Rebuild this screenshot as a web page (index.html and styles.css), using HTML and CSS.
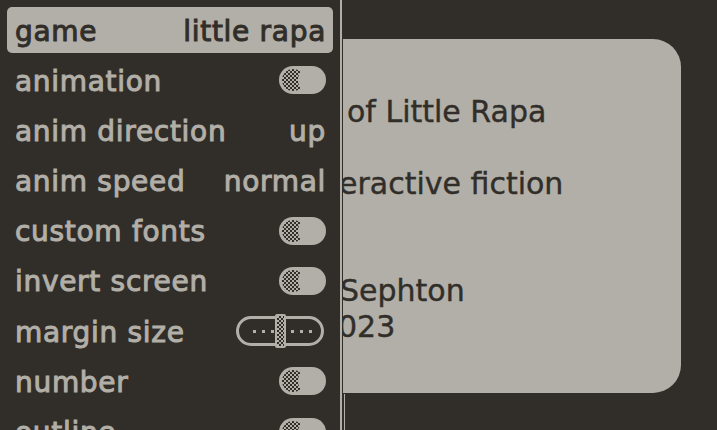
FILE: index.html
```html
<!DOCTYPE html>
<html lang="en">
<head>
<meta charset="utf-8">
<title>Settings</title>
<link rel="stylesheet" href="styles.css">
</head>
<body>
<div class="screen">
  <aside class="panel">
    <ul class="menu">
      <li class="row selected"><span class="label">game</span><span class="value">little rapa</span></li>
      <li class="row"><span class="label">animation</span><span class="toggle"></span></li>
      <li class="row"><span class="label">anim direction</span><span class="value">up</span></li>
      <li class="row"><span class="label">anim speed</span><span class="value">normal</span></li>
      <li class="row"><span class="label">custom fonts</span><span class="toggle"></span></li>
      <li class="row"><span class="label">invert screen</span><span class="toggle"></span></li>
      <li class="row"><span class="label">margin size</span>
        <span class="slider">
          <span class="dot"></span><span class="dot"></span><span class="dot"></span>
          <span class="knob"></span>
          <span class="dot"></span><span class="dot"></span><span class="dot"></span>
        </span>
      </li>
      <li class="row"><span class="label">number</span><span class="toggle"></span></li>
      <li class="row"><span class="label">outline</span><span class="toggle"></span></li>
    </ul>
  </aside>
  <main class="main">
    <section class="card">
      <p class="line title">of Little Rapa</p>
      <p class="line sub">eractive fiction</p>
      <p class="line author">Sephton</p>
      <p class="line year">023</p>
    </section>
    <div class="next"></div>
  </main>
</div>
</body>
</html>
```
FILE: styles.css
```css
html, body {
  margin: 0;
  padding: 0;
  background: #312e29;
}
body {
  width: 717px;
  height: 430px;
  overflow: hidden;
  font-family: "DejaVu Sans", "Liberation Sans", sans-serif;
}
.screen {
  display: flex;
  width: 717px;
  height: 430px;
  overflow: hidden;
}
.panel {
  width: 340px;
  flex: none;
  border-right: 2px solid #b2afa8;
  background: #312e29;
}
.menu {
  list-style: none;
  margin: 0;
  padding: 7px 7px 0;
  display: flex;
  flex-direction: column;
  gap: 4.2px;
}
.row {
  height: 46px;
  flex: none;
  box-sizing: border-box;
  padding: 2px 7px 0 8px;
  display: flex;
  align-items: center;
  justify-content: space-between;
  color: #b2afa8;
  font-size: 28px;
  letter-spacing: 0.7px;
  -webkit-text-stroke: 1px currentColor;
  white-space: nowrap;
}
.row.selected {
  background: #b2afa8;
  color: #312e29;
  border-radius: 5px;
}
.value {
  margin-right: 0;
}
.toggle {
  position: relative;
  width: 47px;
  height: 28px;
  margin-top: -2px;
  border-radius: 14px;
  background: #b2afa8;
  overflow: hidden;
  flex: none;
}
.toggle::before {
  content: "";
  position: absolute;
  left: 3px;
  top: 3px;
  width: 22px;
  height: 22px;
  border-radius: 50%;
  background: repeating-conic-gradient(#312e29 0 25%, #b2afa8 0 50%) 0 0 / 4px 4px;
}
.toggle::after {
  content: "";
  position: absolute;
  left: 19px;
  top: 1px;
  width: 26px;
  height: 26px;
  border-radius: 50%;
  background: #b2afa8;
}
.slider {
  width: 88px;
  height: 30px;
  margin-top: -2px;
  box-sizing: border-box;
  border: 3px solid #b2afa8;
  border-radius: 15px;
  display: flex;
  align-items: center;
  padding-left: 14px;
  gap: 6px;
  flex: none;
  margin-right: 2px;
}
.dot {
  width: 3px;
  height: 3px;
  background: #b2afa8;
  flex: none;
}
.knob {
  width: 11px;
  height: 34px;
  box-sizing: border-box;
  border: 2px solid #b2afa8;
  border-radius: 2px;
  margin: 0 -1px 0 -5px;
  background: repeating-conic-gradient(#312e29 0 25%, #b2afa8 0 50%) 0 0 / 4px 4px;
  flex: none;
}
.main {
  flex: 1;
  padding-top: 39px;
  display: flex;
  flex-direction: column;
}
.card {
  width: 338px;
  height: 354px;
  margin-left: 1px;
  box-sizing: border-box;
  background: #b2afa8;
  border-radius: 0 28px 28px 0;
  overflow: hidden;
  padding-top: 55px;
  color: #312e29;
  font-size: 30px;
  line-height: 35.85px;
  -webkit-text-stroke: 0.4px currentColor;
}
.line {
  margin: 0;
  white-space: nowrap;
}
.title { margin-left: 4px; }
.sub { margin-top: 35.85px; margin-left: -4px; }
.author { margin-top: 71.7px; margin-left: -3px; }
.year { margin-left: -5px; }
.next {
  flex: 1;
  margin-left: 2px;
  margin-top: 1px;
  border-left: 1px solid #b2afa8;
}
```
